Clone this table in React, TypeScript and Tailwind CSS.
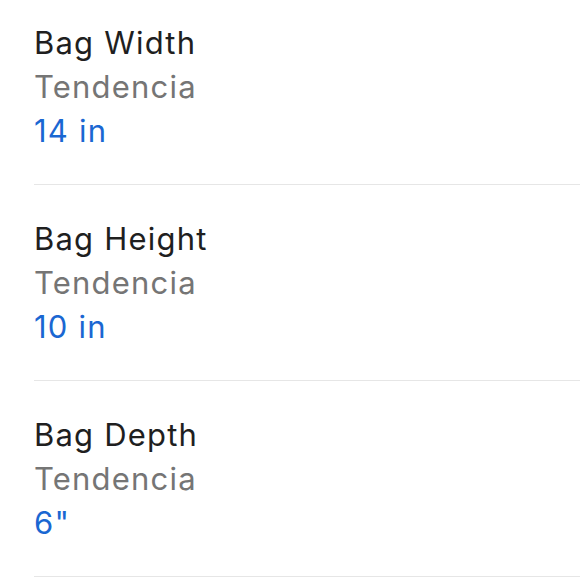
import React from 'react';

const rows = [
  { title: 'Bag Width', value: '14 in' },
  { title: 'Bag Height', value: '10 in' },
  { title: 'Bag Depth', value: '6"' },
];

export default function App() {
  return (
    <div className="w-[580px] h-[580px] overflow-hidden bg-white font-['Inter',sans-serif]">
      <div className="-mt-[11px] pl-[34px]">
        {rows.map((r) => (
          <div key={r.title} className="pt-[32px] pb-[31px] border-b border-[#e6e6e6] text-[31px] leading-[44px] tracking-[1.2px]">
            <div className="text-[#1f1f1f]">{r.title}</div>
            <div className="text-[#757575]">Tendencia</div>
            <div className="text-[#1a67d2]">{r.value}</div>
          </div>
        ))}
      </div>
    </div>
  );
}
